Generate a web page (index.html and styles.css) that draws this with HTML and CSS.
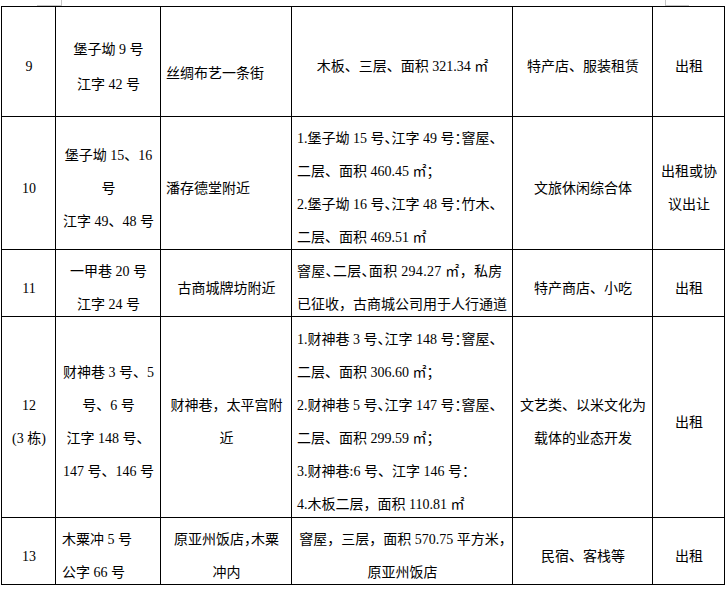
FILE: index.html
```html
<!DOCTYPE html>
<html lang="zh-CN">
<head>
<meta charset="utf-8">
<title>表格</title>
<link rel="stylesheet" href="styles.css">
</head>
<body>
<div class="sheet">
  <div class="marks"><span class="mark mark-l"></span><span class="mark mark-r"></span></div>
  <table class="grid">
    <colgroup>
      <col class="w1"><col class="w2"><col class="w3"><col class="w4"><col class="w5"><col class="w6">
    </colgroup>
    <tbody>
      <tr class="r9">
        <td class="c"><span class="t">9</span></td>
        <td class="c tall"><span class="t">堡子坳 9 号<br>江字 42 号</span></td>
        <td class="l low"><span class="t">丝绸布艺一条街</span></td>
        <td class="c"><span class="t">木板、三层、面积 321.34 ㎡</span></td>
        <td class="c"><span class="t">特产店、服装租赁</span></td>
        <td class="c"><span class="t">出租</span></td>
      </tr>
      <tr class="r10">
        <td class="c"><span class="t">10</span></td>
        <td class="c"><span class="t">堡子坳 15、16<br>号<br>江字 49、48 号</span></td>
        <td class="l"><span class="t">潘存德堂附近</span></td>
        <td class="l"><span class="t">1.堡子坳 15 号<i class="h">、</i>江字 49 号<i class="h">：</i>窨屋、<br>二层、面积 460.45 ㎡；<br>2.堡子坳 16 号<i class="h">、</i>江字 48 号<i class="h">：</i>竹木、<br>二层、面积 469.51 ㎡</span></td>
        <td class="c"><span class="t">文旅休闲综合体</span></td>
        <td class="c"><span class="t">出租或协<br>议出让</span></td>
      </tr>
      <tr class="r11">
        <td class="c"><span class="t">11</span></td>
        <td class="c"><span class="t">一甲巷 20 号<br>江字 24 号</span></td>
        <td class="c"><span class="t">古商城牌坊附近</span></td>
        <td class="l"><span class="t"><b class="wide">窨屋<i class="h">、</i>二层<i class="h">、</i>面积 294.27 ㎡，私房</b><br>已征收，古商城公司用于人行通道</span></td>
        <td class="c"><span class="t">特产商店、小吃</span></td>
        <td class="c"><span class="t">出租</span></td>
      </tr>
      <tr class="r12">
        <td class="c"><span class="t">12<br>(3 栋)</span></td>
        <td class="c"><span class="t">财神巷 3 号、5<br>号、6 号<br>江字 148 号、<br>147 号、146 号</span></td>
        <td class="c"><span class="t">财神巷，太平宫附<br>近</span></td>
        <td class="l"><span class="t">1.财神巷 3 号<i class="h">、</i>江字 148 号<i class="h">：</i>窨屋、<br>二层、面积 306.60 ㎡；<br>2.财神巷 5 号<i class="h">、</i>江字 147 号<i class="h">：</i>窨屋、<br>二层、面积 299.59 ㎡；<br>3.财神巷:6 号、江字 146 号<i class="h">：</i><br>4.木板二层，面积 110.81 ㎡</span></td>
        <td class="c"><span class="t">文艺类、以米文化为<br>载体的业态开发</span></td>
        <td class="c"><span class="t">出租</span></td>
      </tr>
      <tr class="r13">
        <td class="c"><span class="t">13</span></td>
        <td class="l pad2"><span class="t">木粟冲 5 号<br>公字 66 号</span></td>
        <td class="c"><span class="t">原亚州饭店<i class="h">，</i>木粟<br>冲内</span></td>
        <td class="c"><span class="t">窨屋，三层，面积 570.75 平方米<i class="h">，</i><br>原亚州饭店</span></td>
        <td class="c"><span class="t">民宿、客栈等</span></td>
        <td class="c"><span class="t">出租</span></td>
      </tr>
    </tbody>
  </table>
</div>
</body>
</html>
```
FILE: styles.css
```css
html, body {
  margin: 0;
  padding: 0;
  background: #ffffff;
}

.sheet {
  width: 728px;
  font-family: "Liberation Serif", "Noto Sans CJK SC", serif;
  font-size: 14px;
  color: #000000;
}

.marks {
  display: flex;
  justify-content: space-between;
  height: 6px;
  padding: 0 39px 0 37px;
  box-sizing: border-box;
}

.mark {
  display: block;
  height: 6px;
  box-sizing: border-box;
  border-bottom: 1px solid #c6c6c6;
}

.mark-l {
  width: 25px;
  border-right: 1px solid #c6c6c6;
}

.mark-r {
  width: 24px;
  border-left: 1px solid #c6c6c6;
}

.grid {
  border-collapse: collapse;
  table-layout: fixed;
  width: 724px;
  margin-left: 1px;
}

.w1 { width: 54px; }
.w2 { width: 105px; }
.w3 { width: 131px; }
.w4 { width: 221px; }
.w5 { width: 140px; }
.w6 { width: 72px; }

.grid td {
  border: 1px solid #000000;
  padding: 0 4px 0 5px;
  vertical-align: middle;
  line-height: 33px;
  white-space: nowrap;
  overflow: visible;
}

.r9 { height: 110px; }
.r10 { height: 133px; }
.r11 { height: 67px; }
.r12 { height: 201px; }
.r13 { height: 67px; }

.grid td.c { text-align: center; }
.grid td.l { text-align: left; }

.grid td.low { padding-top: 13px; }
.grid td.tall { line-height: 35px; }
.grid td.pad2 { padding-left: 6px; }

.t {
  line-height: 14px;
  vertical-align: -5px;
}

.h {
  font-style: normal;
  font-feature-settings: "halt" 1;
}

.wide {
  font-weight: normal;
  letter-spacing: 0.3px;
}
```
